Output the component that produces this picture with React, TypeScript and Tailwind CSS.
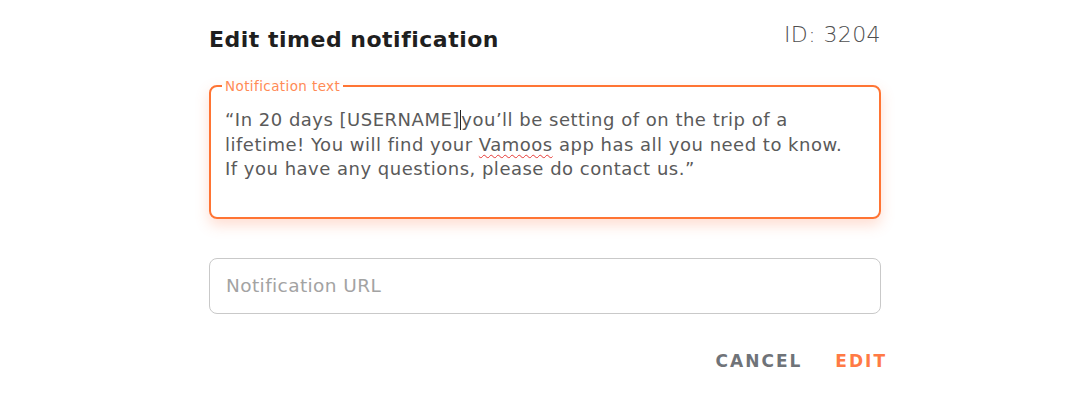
import React from "react";

export default function App() {
  return (
    <div className="w-[1090px] h-[400px] bg-white font-['DejaVu_Sans',sans-serif]">
      <div className="w-[672px] ml-[209px] pt-[22px]">
        {/* header */}
        <div className="flex items-start justify-between h-[57px]">
          <h1 className="mt-[5px] text-[22px] leading-[26px] font-bold tracking-[0.5px] text-[#1f1f1f]">
            Edit timed notification
          </h1>
          <span className="text-[22px] leading-[26px] tracking-[0.4px] text-[#4f4f4f] font-light">ID: 3204</span>
        </div>

        {/* notification text */}
        <fieldset className="h-[140px] border-2 border-[#ff7433] rounded-[8px] px-[14px] shadow-[0_6px_14px_rgba(255,120,70,0.25)]">
          <legend className="px-[3px] -ml-[3px] text-[13.5px] tracking-[0.4px] text-[#ff8a55] leading-[14px]">
            Notification text
          </legend>
          <p className="mt-[15px] text-[18px] leading-[24.5px] tracking-[0.5px] text-[#5a5a5a] whitespace-nowrap">
            “In 20 days [USERNAME]
            <span className="inline-block w-[1.5px] h-[20px] bg-[#222] align-[-4px]" />
            you’ll be setting of on the trip of a
            <br />
            lifetime! You will find your{" "}
            <span className="underline decoration-wavy decoration-[#e53935] decoration-1 underline-offset-[3px]">
              Vamoos
            </span>{" "}
            app has all you need to know.
            <br />
            If you have any questions, please do contact us.”
          </p>
        </fieldset>

        {/* url */}
        <div className="mt-[39px] h-[56px] border border-[#c9c9c9] rounded-[8px] flex items-center px-[16px]">
          <span className="text-[18.5px] tracking-[0.4px] text-[#a3a3a3]">Notification URL</span>
        </div>

        {/* actions */}
        <div className="mt-[35px] flex justify-end gap-[33px] -mr-[6px]">
          <button className="text-[17px] font-semibold tracking-[2px] text-[#6f7378]">CANCEL</button>
          <button className="text-[17px] font-semibold tracking-[2px] text-[#ff7a45]">EDIT</button>
        </div>
      </div>
    </div>
  );
}
